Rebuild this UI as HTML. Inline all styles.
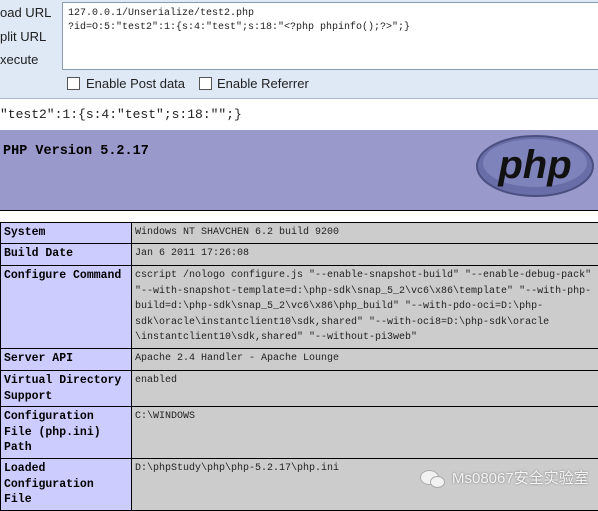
<!DOCTYPE html>
<html><head><meta charset="utf-8"><style>
body{margin:0;width:598px;height:505px;overflow:hidden;background:#fff;font-family:"Liberation Sans",sans-serif;position:relative}
.abs{position:absolute}
.tb{left:0;top:0;width:598px;height:98px;background:#dfe9f5;border-bottom:1px solid #a9b8cc}
.lbl{font-size:13px;color:#1e1e1e;left:0}
.ta{left:62px;top:2px;width:540px;height:68px;background:#fff;border:1px solid #8a9bb3;font-family:"Liberation Mono",monospace;font-size:10px;line-height:14px;padding:4px 5px;box-sizing:border-box;color:#222}
.cb{width:11px;height:11px;border:1px solid #555;background:#fff}
.mono{font-family:"Liberation Mono",monospace}
.hdr{left:0;top:130px;width:598px;height:80px;background:#9999cc;border-bottom:1px solid #000}
table{position:absolute;left:0;top:222px;border-collapse:collapse;width:600px;table-layout:fixed}
td{border:1px solid #000;vertical-align:top;font-family:"Liberation Mono",monospace;padding:2px 3px;font-size:10px;line-height:15.5px;color:#222;overflow:hidden}
td.e{background:#ccccff;font-weight:bold;font-size:11.5px;width:124px;line-height:15.5px;color:#000}
td.v{background:#cccccc}
</style></head><body>
<div class="abs tb"></div>
<div class="abs lbl" style="top:5px">oad URL</div>
<div class="abs lbl" style="top:29px">plit URL</div>
<div class="abs lbl" style="top:52px">xecute</div>
<div class="abs ta">127.0.0.1/Unserialize/test2.php<br>?id=O:5:"test2":1:{s:4:"test";s:18:"&lt;?php phpinfo();?&gt;";}</div>
<div class="abs cb" style="left:67px;top:77px"></div>
<div class="abs" style="left:86px;top:76px;font-size:13px;color:#222">Enable Post data</div>
<div class="abs cb" style="left:199px;top:77px"></div>
<div class="abs" style="left:217px;top:76px;font-size:13px;color:#222">Enable Referrer</div>
<div class="abs mono" style="left:0;top:107px;font-size:13px;color:#222">"test2":1:{s:4:"test";s:18:"";}</div>
<div class="abs hdr"></div>
<div class="abs mono" style="left:3px;top:144px;font-size:13.5px;font-weight:bold;color:#000">PHP Version 5.2.17</div>
<svg class="abs" style="left:474px;top:133px" width="122" height="66" viewBox="0 0 122 66">
<ellipse cx="61" cy="33" rx="58" ry="30" fill="#6a6ea8" stroke="#4b4f80" stroke-width="2"/>
<ellipse cx="61" cy="30" rx="52" ry="24" fill="#7f83bb"/>
<text x="61" y="45" text-anchor="middle" font-family="Liberation Sans,sans-serif" font-weight="bold" font-style="italic" font-size="40" fill="#111">php</text>
</svg>
<table>
<tr style="height:21px"><td class="e">System</td><td class="v">Windows NT SHAVCHEN 6.2 build 9200</td></tr>
<tr style="height:22px"><td class="e">Build Date</td><td class="v">Jan 6 2011 17:26:08</td></tr>
<tr style="height:83px"><td class="e">Configure Command</td><td class="v">cscript /nologo configure.js "--enable-snapshot-build" "--enable-debug-pack" "--with-snapshot-template=d:\php-sdk\snap_5_2\vc6\x86\template" "--with-php-build=d:\php-sdk\snap_5_2\vc6\x86\php_build" "--with-pdo-oci=D:\php-sdk\oracle\instantclient10\sdk,shared" "--with-oci8=D:\php-sdk\oracle \instantclient10\sdk,shared" "--without-pi3web"</td></tr>
<tr style="height:22px"><td class="e">Server API</td><td class="v">Apache 2.4 Handler - Apache Lounge</td></tr>
<tr style="height:36px"><td class="e">Virtual Directory Support</td><td class="v">enabled</td></tr>
<tr style="height:52px"><td class="e">Configuration File (php.ini) Path</td><td class="v">C:\WINDOWS</td></tr>
<tr style="height:50px"><td class="e">Loaded Configuration File</td><td class="v">D:\phpStudy\php\php-5.2.17\php.ini</td></tr>
</table>
<div class="abs" style="left:420px;top:470px;width:17px;height:13px;border-radius:50%;background:#f2f2f2;border:1px solid #aaa"></div>
<div class="abs" style="left:430px;top:476px;width:13px;height:10px;border-radius:50%;background:#f2f2f2;border:1px solid #aaa"></div>
<div class="abs" style="left:452px;top:467px;font-size:15px;color:#f4f4f4;font-family:'Liberation Sans','Noto Sans CJK SC',sans-serif;text-shadow:0 0 2px #777">Ms08067安全实验室</div>
</body></html>
